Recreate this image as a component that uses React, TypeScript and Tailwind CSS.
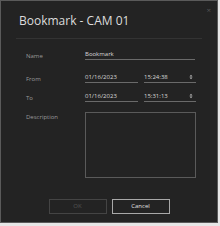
const labelCls = 'w-[59px] shrink-0 text-[6px] leading-[8px] text-[#9a9a9a]';

const Field = ({ value, className }: { value: string, className?: string }) => (
  <div className={`border-b border-[#6a6a6a] pb-[1px] text-[6px] leading-[8px] text-[#d8d8d8] ${className || ''}`}>
    {value}
  </div>
);

const TimeField = ({ value }: { value: string }) => (
  <div className="flex w-[52px] items-end justify-between border-b border-[#6a6a6a] pb-[1px] text-[6px] leading-[8px] text-[#d8d8d8]">
    <span>{value}</span>
    <svg width="4" height="6" viewBox="0 0 4 6" className="mb-[1px] mr-[3px]">
      <path d="M0.5 2.5 L2 0.8 L3.5 2.5 Z" fill="#bbb" />
      <path d="M0.5 3.5 L2 5.2 L3.5 3.5 Z" fill="#bbb" />
    </svg>
  </div>
);

const App = () => {
  return (
    <div className="h-[226px] w-[220px] bg-[#e6e6e6]" style={{ fontFamily: '"Open Sans", "Noto Sans", sans-serif' }}>
      <div className="relative flex h-[223px] w-[218px] flex-col border border-[#5a5a5a] bg-[#232323]">
        <span className="absolute right-[6px] top-[5px] text-[8px] leading-none text-[#555]">×</span>

        <div className="mx-[15px] border-b border-[#333] pb-[10px] pl-[3px] pt-[13px]">
          <h3 className="text-[12px] leading-[14px] text-[#dcdcdc]">
            Bookmark - CAM 01
          </h3>
        </div>

        <div className="flex flex-col pl-[25px] pt-[11px]">
          <div className="flex items-end">
            <span className={labelCls}>Name</span>
            <Field value="Bookmark" className="w-[110px]" />
          </div>
          <div className="mt-[13px] flex items-end">
            <span className={labelCls}>From</span>
            <Field value="01/16/2023" className="mr-[6px] w-[53px]" />
            <TimeField value="15:24:38" />
          </div>
          <div className="mt-[9px] flex items-end">
            <span className={labelCls}>To</span>
            <Field value="01/16/2023" className="mr-[6px] w-[53px]" />
            <TimeField value="15:31:13" />
          </div>
          <div className="mt-[10px] flex items-start">
            <span className={`${labelCls} pt-[1px]`}>Description</span>
            <div className="h-[66px] w-[111px] border border-[#5a5a5a]" />
          </div>
        </div>

        <div className="mt-auto flex justify-center gap-[5px] pb-[8px]">
          <button className="h-[15px] w-[58px] border border-[#444] text-[6px] text-[#555]">OK</button>
          <button className="h-[15px] w-[58px] border border-[#a8a8a8] text-[6px] text-[#e0e0e0]">Cancel</button>
        </div>
      </div>
    </div>
  );
};

export default App;
